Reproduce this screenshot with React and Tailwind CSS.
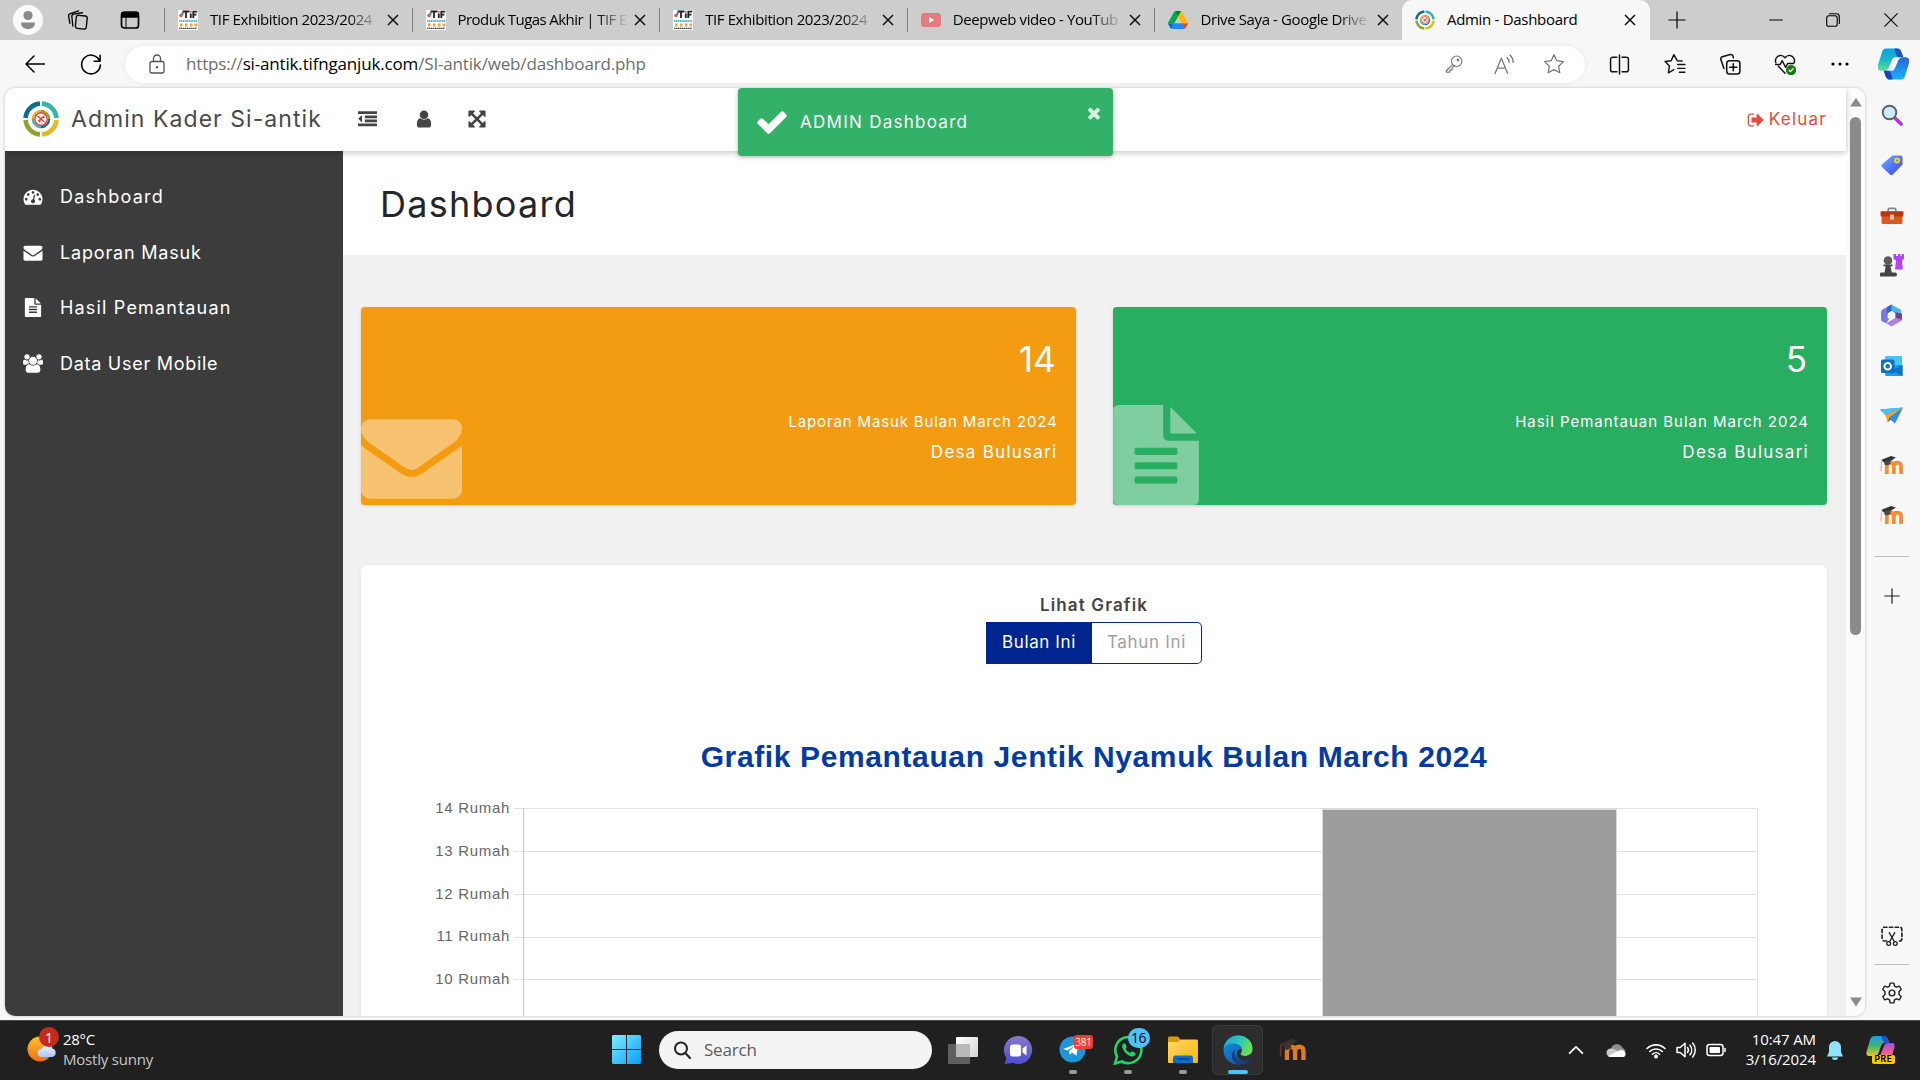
import React from 'react';

const UI = "font-['Open_Sans',sans-serif]";

const FA = {
  envelope: 'M1792 710v794q0 66-47 113t-113 47h-1472q-66 0-113-47t-47-113v-794q44 49 101 87 362 246 497 345 57 42 92.5 65.5t94.5 48 110 24.5h2q51 0 110-24.5t94.5-48 92.5-65.5q170-123 498-345 57-39 100-87zm0-294q0 79-49 151t-122 123q-376 261-468 325-10 7-42.5 31t-54 38.5-52 32.5-57.5 27-50 9h-2q-23 0-50-9t-57.5-27-52-32.5-54-38.5-42.5-31q-91-64-262-182.5t-205-142.5q-62-42-117-115.5t-55-136.5q0-78 41.5-130t118.5-52h1472q65 0 112.5 47t47.5 113z',
  file: 'M1596 476q14 14 28 36h-472v-472q22 14 36 28zm-476 164h544v1056q0 40-28 68t-68 28h-1344q-40 0-68-28t-28-68v-1600q0-40 28-68t68-28h800v544q0 40 28 68t68 28zm160 736v-64q0-14-9-23t-23-9h-704q-14 0-23 9t-9 23v64q0 14 9 23t23 9h704q14 0 23-9t9-23zm0-256v-64q0-14-9-23t-23-9h-704q-14 0-23 9t-9 23v64q0 14 9 23t23 9h704q14 0 23-9t9-23zm0-256v-64q0-14-9-23t-23-9h-704q-14 0-23 9t-9 23v64q0 14 9 23t23 9h704q14 0 23-9t9-23z',
  users: 'M593 896q-162 5-265 128h-134q-82 0-138-40.5t-56-118.5q0-353 124-353 6 0 43.5 21t97.5 42.5 119 21.5q67 0 133-23-5 37-5 66 0 139 81 256zm1071 637q0 120-73 189.5t-194 69.5h-874q-121 0-194-69.5t-73-189.5q0-53 3.5-103.5t14-109 26.5-108.5 43-97.5 62-81 85.5-53.5 111.5-20q10 0 43 21.5t73 48 107 48 135 21.5 135-21.5 107-48 73-48 43-21.5q61 0 111.5 20t85.5 53.5 62 81 43 97.5 26.5 108.5 14 109 3.5 103.5zm-1024-1277q0 106-75 181t-181 75-181-75-75-181 75-181 181-75 181 75 75 181zm704 384q0 159-112.5 271.5t-271.5 112.5-271.5-112.5-112.5-271.5 112.5-271.5 271.5-112.5 271.5 112.5 112.5 271.5zm576 225q0 78-56 118.5t-138 40.5h-134q-103-123-265-128 81-117 81-256 0-29-5-66 66 23 133 23 59 0 119-21.5t97.5-42.5 43.5-21q124 0 124 353zm-128-609q0 106-75 181t-181 75-181-75-75-181 75-181 181-75 181 75 75 181z',
  user: 'M1536 1399q0 109-62.5 187t-150.5 78h-854q-88 0-150.5-78t-62.5-187q0-85 8.5-160.5t31.5-152 58.5-131 94-89 134.5-34.5q131 128 313 128t313-128q76 0 134.5 34.5t94 89 58.5 131 31.5 152 8.5 160.5zm-256-887q0 159-112.5 271.5t-271.5 112.5-271.5-112.5-112.5-271.5 112.5-271.5 271.5-112.5 271.5 112.5 112.5 271.5z',
  gauge: 'M384 1152q0-53-37.5-90.5t-90.5-37.5-90.5 37.5-37.5 90.5 37.5 90.5 90.5 37.5 90.5-37.5 37.5-90.5zm192-448q0-53-37.5-90.5t-90.5-37.5-90.5 37.5-37.5 90.5 37.5 90.5 90.5 37.5 90.5-37.5 37.5-90.5zm428 481l101-382q6-26-7.5-48.5t-38.5-29.5-48 6.5-30 39.5l-101 382q-60 5-107 43.5t-63 98.5q-20 77 20 146t117 89 146-20 89-117q16-60-6-117t-72-91zm660-33q0-53-37.5-90.5t-90.5-37.5-90.5 37.5-37.5 90.5 37.5 90.5 90.5 37.5 90.5-37.5 37.5-90.5zm-640-640q0-53-37.5-90.5t-90.5-37.5-90.5 37.5-37.5 90.5 37.5 90.5 90.5 37.5 90.5-37.5 37.5-90.5zm448 192q0-53-37.5-90.5t-90.5-37.5-90.5 37.5-37.5 90.5 37.5 90.5 90.5 37.5 90.5-37.5 37.5-90.5zm320 448q0 261-141 483-19 29-54 29h-1402q-35 0-54-29-141-221-141-483 0-182 71-348t191-286 286-191 348-71 348 71 286 191 191 286 71 348z',
  outdent: 'M384 544v576q0 13-9.5 22.5t-22.5 9.5q-14 0-23-9l-288-288q-9-9-9-23t9-23l288-288q9-9 23-9 13 0 22.5 9.5t9.5 22.5zm1408 768v192q0 13-9.5 22.5t-22.5 9.5h-1728q-13 0-22.5-9.5t-9.5-22.5v-192q0-13 9.5-22.5t22.5-9.5h1728q13 0 22.5 9.5t9.5 22.5zm0-384v192q0 13-9.5 22.5t-22.5 9.5h-1088q-13 0-22.5-9.5t-9.5-22.5v-192q0-13 9.5-22.5t22.5-9.5h1088q13 0 22.5 9.5t9.5 22.5zm0-384v192q0 13-9.5 22.5t-22.5 9.5h-1088q-13 0-22.5-9.5t-9.5-22.5v-192q0-13 9.5-22.5t22.5-9.5h1088q13 0 22.5 9.5t9.5 22.5zm0-384v192q0 13-9.5 22.5t-22.5 9.5h-1728q-13 0-22.5-9.5t-9.5-22.5v-192q0-13 9.5-22.5t22.5-9.5h1728q13 0 22.5 9.5t9.5 22.5z',
  arrows: 'M1411 541l-355 355 355 355 144-144q29-31 70-14 39 17 39 59v448q0 26-19 45t-45 19h-448q-42 0-59-40-17-39 14-69l144-144-355-355-355 355 144 144q31 30 14 69-17 40-59 40h-448q-26 0-45-19t-19-45v-448q0-42 40-59 39-17 69 14l144 144 355-355-355-355-144 144q-19 19-45 19-12 0-24-5-40-17-40-59v-448q0-26 19-45t45-19h448q42 0 59 40 17 39-14 69l-144 144 355 355 355-355-144-144q-31-30-14-69 17-40 59-40h448q26 0 45 19t19 45v448q0 42-39 59-13 5-25 5-26 0-45-19z',
  check: 'M1671 566q0 40-28 68l-724 724-136 136q-28 28-68 28t-68-28l-136-136-362-362q-28-28-28-68t28-68l136-136q28-28 68-28t68 28l294 295 656-657q28-28 68-28t68 28l136 136q28 28 28 68z',
  times: 'M1490 1322q0 40-28 68l-136 136q-28 28-68 28t-68-28l-294-294-294 294q-28 28-68 28t-68-28l-136-136q-28-28-28-68t28-68l294-294-294-294q-28-28-28-68t28-68l136-136q28-28 68-28t68 28l294 294 294-294q28-28 68-28t68 28l136 136q28 28 28 68t-28 68l-294 294 294 294q28 28 28 68z',
  signOut: 'M704 1440q0 4 1 20t.5 26.5-3 23.5-10 19.5-20.5 6.5h-320q-119 0-203.5-84.5t-84.5-203.5v-704q0-119 84.5-203.5t203.5-84.5h320q13 0 22.5 9.5t9.5 22.5q0 4 1 20t.5 26.5-3 23.5-10 19.5-20.5 6.5h-320q-66 0-113 47t-47 113v704q0 66 47 113t113 47h312l11.5 1 11.5 3 8 5.5 7 9 2 13.5zm928-544q0 26-19 45l-544 544q-19 19-45 19t-45-19-19-45v-288h-448q-26 0-45-19t-19-45v-384q0-26 19-45t45-19h448v-288q0-26 19-45t45-19 45 19l544 544q19 19 19 45z',
};

function Fa({ name, box = '0 0 1792 1792', className }) {
  return (
    <svg viewBox={box} fill="currentColor" className={className}>
      <path d={FA[name]} />
    </svg>
  );
}

/* Thin outline icon on a 20-unit grid */
function Line({ children, className = 'size-5', sw = 1.3 }) {
  return (
    <svg viewBox="0 0 20 20" fill="none" stroke="currentColor" strokeWidth={sw} strokeLinecap="round" strokeLinejoin="round" className={`shrink-0 ${className}`}>
      {children}
    </svg>
  );
}

function SiAntikLogo({ className }) {
  return (
    <svg viewBox="0 0 36 36" fill="none" className={`shrink-0 ${className}`}>
      <circle cx="18" cy="18" r="17.9" fill="#fff" />
      <g strokeWidth="4.6">
        <path d="M2.6 17A15.5 15.5 0 0 1 17 2.6" stroke="#0d6d93" />
        <path d="M19 2.6A15.5 15.5 0 0 1 33.400 17" stroke="#35b5a8" />
        <path d="M33.400 19A15.500 15.500 0 0 1 19 33.400" stroke="#e6b923" />
        <path d="M17 33.400A15.500 15.500 0 0 1 2.600 19" stroke="#8aa62e" />
      </g>
      <g strokeWidth="2.200">
        <path d="M9.800 18A8.200 8.200 0 0 1 18 9.800" stroke="#e6b923" />
        <path d="M18 9.800A8.200 8.200 0 0 1 26.200 18" stroke="#8aa62e" />
        <path d="M26.200 18A8.200 8.200 0 0 1 18 26.200" stroke="#0d6d93" />
        <path d="M18 26.200A8.200 8.200 0 0 1 9.800 18" stroke="#35b5a8" />
      </g>
      <circle cx="18" cy="18" r="6.200" stroke="#ee3a32" strokeWidth="1.400" fill="#fff" />
      <path d="M14.500 15l7 6M15 20l3-2 3.500-3.500M17.500 18l-1 3.500M18 16l3.500.5" stroke="#ee3a32" strokeWidth="1.200" />
    </svg>
  );
}

function TifIcon() {
  return (
    <svg viewBox="0 0 20 20" className="size-5 shrink-0">
      <rect width="20" height="20" fill="#fff" />
      <circle cx="3" cy="5.500" r="1.700" fill="#e8502f" />
      <circle cx="4.500" cy="3.500" r="1.200" fill="#2b8fd0" />
      <path d="M4.500 1.500h7M8 1.500V8M12.800 3.500V8M15.300 8V1.600h4M15.300 4.700h3.200" stroke="#222" strokeWidth="1.800" fill="none" />
      <circle cx="12.800" cy="1.700" r="1" fill="#e8502f" />
      <path d="M1 11h18" stroke="#4db4e8" strokeWidth="1.800" strokeDasharray="1.400 .5" />
      <path d="M2 15h2.500M7 15h2.500M12 15h2.500M16.500 15H19" stroke="#f0a04b" strokeWidth="3" />
      <path d="M1 18.400h18" stroke="#444" strokeWidth="1.200" strokeDasharray="1.600 .4" />
    </svg>
  );
}

function YoutubeIcon() {
  return (
    <svg viewBox="0 0 20 20" className="size-5 shrink-0">
      <rect y="3" width="20" height="14" rx="3.500" fill="#e67b7d" />
      <path d="M8 7l5.200 3L8 13z" fill="#fff" />
    </svg>
  );
}

function DriveIcon() {
  return (
    <svg viewBox="0 0 87 78" className="h-[18px] w-5 shrink-0">
      <path d="M6.600 66.850l3.850 6.650c.8 1.400 1.950 2.500 3.300 3.300L27.500 53H0c0 1.550.4 3.100 1.200 4.500z" fill="#0066da" />
      <path d="M43.650 25L29.900 1.200c-1.350.8-2.500 1.900-3.300 3.300l-25.400 44A9.060 9.060 0 0 0 0 53h27.500z" fill="#00ac47" />
      <path d="M73.550 76.800c1.350-.8 2.500-1.900 3.300-3.300l1.600-2.750 7.650-13.250c.8-1.400 1.200-2.950 1.200-4.500H59.800l5.850 11.500z" fill="#ea4335" />
      <path d="M43.650 25L57.400 1.200C56.050.4 54.500 0 52.900 0H34.400c-1.600 0-3.150.45-4.500 1.200z" fill="#00832d" />
      <path d="M59.800 53H27.500L13.750 76.800c1.350.8 2.900 1.200 4.500 1.200h50.800c1.600 0 3.150-.45 4.500-1.200z" fill="#2684fc" />
      <path d="M73.400 26.500L60.700 4.500c-.8-1.400-1.950-2.500-3.300-3.300L43.650 25 59.800 53h27.450c0-1.550-.4-3.100-1.200-4.500z" fill="#ffba00" />
    </svg>
  );
}

const TABS = [
  { icon: <TifIcon />, title: 'TIF Exhibition 2023/2024', cls: 'tracking-[-0.4px]' },
  { icon: <TifIcon />, title: 'Produk Tugas Akhir | TIF E', cls: 'tracking-[-0.58px]' },
  { icon: <TifIcon />, title: 'TIF Exhibition 2023/2024', cls: 'tracking-[-0.4px]' },
  { icon: <YoutubeIcon />, title: 'Deepweb video - YouTub', cls: 'tracking-[-0.4px]' },
  { icon: <DriveIcon />, title: 'Drive Saya - Google Drive', cls: 'tracking-[-0.38px]' },
];

function CloseX() {
  return (
    <svg viewBox="0 0 12 12" className="size-3 shrink-0" stroke="#111" strokeWidth="1.500" fill="none">
      <path d="M1 1l10 10M11 1L1 11" />
    </svg>
  );
}

function TabStrip() {
  return (
    <div className="flex h-10 shrink-0 bg-[#cdcdcd]">
      <div className="flex w-[164px] items-center pl-[13px]">
        <svg viewBox="0 0 30 30" className="size-[30px]">
          <circle cx="15" cy="15" r="15" fill="#fafafa" />
          <circle cx="15" cy="10.500" r="4.600" fill="#8a8a8a" />
          <path d="M8 17.500h14c0 4.500-3 6.500-7 6.500s-7-2-7-6.500z" fill="#8a8a8a" />
        </svg>
        <Line className="ml-6 size-[22px]" sw={1.200}>
          <rect x="8" y="6" width="10" height="12" rx="2" transform="rotate(6 13 12)" />
          <path d="M5.300 15.500L4.400 6.800a2 2 0 0 1 1.700-2.200l8-1.200M2.600 13l-1.100-6.500A2 2 0 0 1 3 4.200l7.500-2.400" />
        </Line>
        <Line className="ml-[31px] size-5" sw={1.700}>
          <rect x="1.500" y="2" width="17" height="16" rx="2.800" />
          <path d="M2 3h16v4H2z" fill="currentColor" />
          <path d="M6 7v11" strokeWidth="1" />
        </Line>
      </div>
      {TABS.map((t, i) => (
        <div key={i} className="flex w-[247.600px] items-center pr-[13px]">
          <div className="h-6 w-px bg-[#7d7d7d]" />
          <div className="ml-[13px]">{t.icon}</div>
          <div className={`ml-3 w-[172px] whitespace-nowrap pb-[2px] text-[15px] text-black [mask-image:linear-gradient(to_right,black_80%,transparent_99%)] ${t.cls}`}>{t.title}</div>
          <div className="ml-auto"><CloseX /></div>
        </div>
      ))}
      <div className="flex w-[248px] items-center rounded-t-[10px] bg-[#f7f7f7] pl-[13px] pr-[14px]">
        <SiAntikLogo className="size-5" />
        <div className="ml-3 pb-[2px] text-[15px] tracking-[-0.3px] text-black">Admin - Dashboard</div>
        <div className="ml-auto"><CloseX /></div>
      </div>
      <div className="flex flex-1 items-center pl-[18px] text-black">
        <Line className="size-[18px]" sw={1.300}><path d="M10 1v18M1 10h18" /></Line>
        <Line className="ml-[83px] size-[14px]" sw={1.600}><path d="M1 10h18" /></Line>
        <Line className="ml-[43px] size-[14px]" sw={1.600}>
          <rect x="1" y="4" width="15" height="15" rx="3" />
          <path d="M5 1h10a4 4 0 0 1 4 4v10" />
        </Line>
        <Line className="ml-[44px] size-[14px]" sw={1.500}><path d="M1 1l18 18M19 1L1 19" /></Line>
      </div>
    </div>
  );
}

function Slot({ w, children }) {
  return <div className={`flex shrink-0 items-center justify-center ${w}`}>{children}</div>;
}

function CopilotIcon() {
  return (
    <svg viewBox="0 0 32 32" className="h-8 w-[31px]">
      <defs>
        <linearGradient id="cpA" x1="0" y1="0" x2="0" y2="1"><stop offset="0" stopColor="#0a9fe4" /><stop offset=".5" stopColor="#1bb6c8" /><stop offset="1" stopColor="#5fe08c" /></linearGradient>
        <linearGradient id="cpB" x1="0" y1="0" x2="0" y2="1"><stop offset="0" stopColor="#2b63d9" /><stop offset="1" stopColor="#16b4ff" /></linearGradient>
      </defs>
      <path d="M9 0h11c3 0 4 3 5 6l1 3h-8c-2 0-3 1-4 4l-3 7c-1 2-3 3-5 3H4c-3 0-5-2-4-6L4 4c1-3 2-4 5-4z" fill="url(#cpA)" />
      <path d="M17 0h3c3 0 4 3 5 6l1 3h-5c-2-1-3-4-4-9z" fill="#1c56b8" />
      <path d="M23 32H12c-3 0-4-3-5-6l-1-3h8c2 0 3-1 4-4l3-7c1-2 3-3 5-3h2c3 0 5 2 4 6l-4 13c-1 3-2 4-5 4z" fill="url(#cpB)" />
      <path d="M15 32h-3c-3 0-4-3-5-6l-1-3h5c2 1 3 4 4 9z" fill="#1747b5" />
    </svg>
  );
}

const STAR = 'M10 1.500l2.600 5.500 6 .8-4.400 4.200 1.100 6L10 15.100 4.700 18l1.100-6L1.400 7.800l6-.8z';

function Toolbar() {
  return (
    <div className="flex h-12 shrink-0 items-center bg-[#f7f7f7]">
      <Slot w="w-[69px]">
        <Line className="size-5" sw={1.500}><path d="M19.500 10H1M9 2L1 10l8 8" /></Line>
      </Slot>
      <Slot w="w-[43px]">
        <Line className="size-[22px]" sw={1.400}><path d="M18 7.500A8.500 8.500 0 1 0 18.500 11M18.300 2v5.500h-5.500" /></Line>
      </Slot>
      <div className="ml-[13px] flex h-[37px] w-[1460px] items-center rounded-full bg-white pl-[22px] shadow-[0_0_4px_rgba(0,0,0,0.08)]">
        <Line className="size-5 text-[#555]" sw={1.300}>
          <rect x="3" y="7.500" width="14" height="11.500" rx="2" />
          <path d="M6.500 7.500V4.500a3.500 3.500 0 0 1 7 0v3" />
          <circle cx="10" cy="13.200" r=".6" fill="currentColor" />
        </Line>
        <div className="ml-[19px] text-[17px] tracking-[-0.165px] text-[#6d6d6d]">
          https://<span className="text-black">si-antik.tifnganjuk.com</span>/SI-antik/web/dashboard.php
        </div>
        <div className="ml-auto flex text-[#757575]">
          <Slot w="w-[50px]">
            <Line className="size-[18px]" sw={1.200}>
              <circle cx="13" cy="7" r="5.800" /><circle cx="14.500" cy="5.500" r="1" />
              <path d="M8.500 10.500L1.500 17.500V19h4v-2.500H8V14l2.200-1.800" />
            </Line>
          </Slot>
          <Slot w="w-[50px]">
            <Line className="size-[21px]" sw={1.200}><path d="M1 18.500L7 4l6 14.500M3.200 13.500h7.600M12.500 3.500a5.500 5.500 0 0 1 1.800 4.500M15.300 1a10 10 0 0 1 3 7" /></Line>
          </Slot>
          <Slot w="w-[50px]"><Line className="size-[22px]" sw={1.100}><path d={STAR} /></Line></Slot>
        </div>
        <div className="w-[6px]" />
      </div>
      <div className="ml-[6px] flex items-center text-[#111]">
        <Slot w="w-[56px]">
          <Line className="size-[21px]" sw={1.400}><path d="M7.500 3H3.500a2 2 0 0 0-2 2v10a2 2 0 0 0 2 2h4M10 1v18M12.500 3h4a2 2 0 0 1 2 2v10a2 2 0 0 1-2 2h-4" /></Line>
        </Slot>
        <Slot w="w-[55px]">
          <Line className="size-[22px]" sw={1.300}><path d="M12 7L9 1.500 6.500 7l-5.500.8 4 4L4 18l5-2.800M12 7l4.500.3M12.500 10.500H19M12.500 14H19M14 17.500h5" /></Line>
        </Slot>
        <Slot w="w-[55px]">
          <Line className="size-[22px]" sw={1.400}>
            <rect x="7" y="7" width="12" height="12" rx="2.500" />
            <path d="M13 9.800v6.400M9.800 13h6.400M4.500 14l-2.800-8A2 2 0 0 1 3 3.400l7.300-2a2 2 0 0 1 2.400 1.300l.4 1.700" />
          </Line>
        </Slot>
        <Slot w="w-[55px]">
          <Line className="size-[22px]" sw={1.300}>
            <path d="M1.700 8.800C.6 6 2.300 2.500 5.500 2.200 7.500 2 9 3 10 4.300 11 3 12.500 2 14.500 2.200c3.200.3 4.900 3.800 3.800 6.600M4 12l6 6.500M1.500 10.500h4L7.500 7l3 6 2-3.500h5.500" />
            <circle cx="15.500" cy="15.500" r="4" fill="#107c10" stroke="#107c10" />
            <path d="M13.700 15.600l1.300 1.300 2.400-2.600" stroke="#fff" />
          </Line>
        </Slot>
        <Slot w="w-[55px]">
          <svg viewBox="0 0 18 4" className="h-1 w-[18px]"><circle cx="2" cy="2" r="1.600" /><circle cx="9" cy="2" r="1.600" /><circle cx="16" cy="2" r="1.600" /></svg>
        </Slot>
        <Slot w="w-[52px]"><CopilotIcon /></Slot>
      </div>
    </div>
  );
}

const MENU = [
  { icon: 'gauge', label: 'Dashboard', cls: 'tracking-[1.250px]' },
  { icon: 'envelope', label: 'Laporan Masuk', cls: 'tracking-[0.820px]' },
  { icon: 'file', label: 'Hasil Pemantauan', cls: 'tracking-[1.180px]' },
  { icon: 'users', label: 'Data User Mobile', cls: 'tracking-[0.720px]', box: '0 0 1920 1792' },
];

function Navbar() {
  return (
    <header className="relative z-10 flex h-[63px] shrink-0 items-center bg-white pl-[18px] pr-[19px] text-[#444] shadow-[0_2px_6px_rgba(0,0,0,0.22)]">
      <SiAntikLogo className="-mt-px size-9" />
      <span className="ml-3 text-[23px] tracking-[1.050px] text-[#4a4a4a]">Admin Kader Si-antik</span>
      <Fa name="outdent" className="ml-[36px] size-[19px]" />
      <Fa name="user" className="-mt-[2px] ml-[37px] size-[20px]" />
      <Fa name="arrows" className="-mt-px ml-[33px] size-[20px]" />
      <div className="ml-auto flex items-center text-[#e74c3c]">
        <Fa name="signOut" className="size-[18px]" />
        <span className="ml-1 text-[17px] tracking-[1.250px]">Keluar</span>
      </div>
    </header>
  );
}

function Toast() {
  return (
    <div className="absolute left-[733px] top-0 z-20 flex h-[68px] w-[375px] items-center rounded-[4px] bg-[#33b168] pl-[17px] text-white shadow-[0_1px_4px_rgba(0,0,0,0.3)]">
      <Fa name="check" className="size-[34px]" />
      <span className="ml-[11px] pt-px text-[17px] tracking-[1.270px]">ADMIN Dashboard</span>
      <Fa name="times" className="absolute right-[10px] top-[16px] size-[18px] text-white/80" />
    </div>
  );
}

function StatCard({ color, icon, iconBox, iconCls, value, caption, captionCls }) {
  return (
    <div className={`relative flex h-[198px] flex-1 flex-col items-end overflow-hidden rounded-[4px] pr-[18px] text-white shadow-[0_1px_3px_rgba(0,0,0,0.15)] ${color}`}>
      <div className="mr-[2px] mt-[30px] text-[35px] leading-[44px]">{value}</div>
      <div className={`mt-[29px] text-[15px] leading-[24px] ${captionCls}`}>{caption}</div>
      <div className="mt-[6px] text-[17px] leading-[24px] tracking-[1.270px]">Desa Bulusari</div>
      <Fa name={icon} box={iconBox} className={`absolute left-0 opacity-40 ${iconCls}`} />
    </div>
  );
}

function Chart() {
  return (
    <div className="flex font-['Liberation_Sans',sans-serif]">
      <div className="flex w-[149px] flex-col text-right text-[15px] leading-[43px] tracking-[0.680px] text-[#666]">
        {['14 Rumah', '13 Rumah', '12 Rumah', '11 Rumah', '10 Rumah'].map((l) => (
          <div key={l} className="h-[42.800px]">{l}</div>
        ))}
      </div>
      <svg viewBox="0 0 1250 220" className="ml-[4px] mt-[22px] h-[220px] w-[1250px]" shapeRendering="crispEdges">
        {[0, 43, 86, 129, 171].map((y) => (
          <rect key={y} x="0" y={y} width="1244" height="1" fill="#e2e2e2" />
        ))}
        <rect x="9" y="0" width="1" height="220" fill="#c4c4c4" />
        <rect x="1243" y="0" width="1" height="220" fill="#e2e2e2" />
        <rect x="808" y="0" width="295" height="220" fill="#dadada" />
        <rect x="809" y="2" width="293" height="220" fill="#9c9c9c" />
      </svg>
    </div>
  );
}

function Page() {
  return (
    <div className="relative flex w-[1841px] flex-col font-['Inter',sans-serif]">
      <Navbar />
      <Toast />
      <div className="flex min-h-0 flex-1">
        <nav className="flex w-[338px] shrink-0 flex-col bg-[#3c3c3c] pt-[18px] text-white">
          {MENU.map((m) => (
            <div key={m.label} className="flex h-[55.500px] items-center pl-[18px]">
              <div className="w-[37px]"><Fa name={m.icon} box={m.box} className="h-[19px] w-[20px]" /></div>
              <span className={`text-[18px] ${m.cls}`}>{m.label}</span>
            </div>
          ))}
        </nav>
        <main className="flex min-w-0 flex-1 flex-col bg-[#f1f1f1]">
          <div className="h-[104px] shrink-0 bg-white pl-[37px] pt-[29px]">
            <h1 className="text-[36px] leading-[48px] tracking-[1.250px] text-[#262626]">Dashboard</h1>
          </div>
          <div className="ml-[18px] mr-[19px] mt-[52px] flex gap-[37px]">
            <StatCard color="bg-[#f39c12]" icon="envelope" iconBox="0 256 1792 1408" iconCls="top-[112px] h-[80px] w-[101px]" value="14" caption="Laporan Masuk Bulan March 2024" captionCls="tracking-[0.850px]" />
            <StatCard color="bg-[#29ae61]" icon="file" iconBox="128 0 1536 1792" iconCls="top-[98px] h-[100px] w-[86px]" value="5" caption="Hasil Pemantauan Bulan March 2024" captionCls="tracking-[0.980px]" />
          </div>
          <section className="ml-[18px] mr-[19px] mt-[60px] flex min-h-0 flex-1 flex-col overflow-hidden rounded-t-[6px] bg-white shadow-[0_0_3px_rgba(0,0,0,0.08)]">
            <div className="mt-[28px] text-center text-[17px] font-semibold leading-[24px] tracking-[1.150px] text-[#444]">Lihat Grafik</div>
            <div className="mt-[5px] flex justify-center text-[17px]">
              <div className="flex h-[42px] w-[106px] items-center justify-center bg-[#00258f] pb-px tracking-[0.600px] text-white">Bulan Ini</div>
              <div className="flex h-[42px] w-[110px] items-center justify-center rounded-r-[5px] border border-l-0 border-[#00258f] pb-px tracking-[0.700px] text-[#a0a0a0]">Tahun Ini</div>
            </div>
            <h2 className="mt-[75px] text-center font-['Liberation_Sans',sans-serif] text-[30px] font-bold leading-[36px] tracking-[0.620px] text-[#043ba0]">Grafik Pemantauan Jentik Nyamuk Bulan March 2024</h2>
            <div className="mt-[11px]"><Chart /></div>
          </section>
        </main>
      </div>
    </div>
  );
}

function Scrollbar() {
  return (
    <div className="flex w-[19px] flex-col items-center bg-[#fcfcfc] pt-[10px]">
      <svg viewBox="0 0 12 9" className="h-[9px] w-3"><path d="M6 0l6 8.500H0z" fill="#8b8b8b" /></svg>
      <div className="mt-[10px] h-[518px] w-[11px] rounded-full bg-[#8b8b8b]" />
      <svg viewBox="0 0 12 10" className="mb-[9px] mt-auto h-[10px] w-3"><path d="M0 .5h12L6 9.500z" fill="#8b8b8b" /></svg>
    </div>
  );
}

function Moodle({ dark }) {
  return (
    <svg viewBox="0 0 26 20" className={dark ? 'h-[22px] w-[30px]' : 'h-[19px] w-[26px]'}>
      <path d="M7.500 19V11q0-4 3.700-4t3.700 4v8M14.900 11q0-4 3.900-4t3.700 4v8" fill="none" stroke={dark ? '#dd7a24' : '#f88d2d'} strokeWidth="4" />
      <path d="M2 4L12 0l5 1.500L9 7 4 6.500z" fill={dark ? '#38322e' : '#333'} />
      <path d="M5 5.500l6-1 .5 4-4 1.500-2.500-1z" fill={dark ? '#45352b' : '#484848'} />
      <path d="M2 5v6M1.600 11v5" stroke={dark ? '#6b4426' : '#eab18b'} strokeWidth="1.200" />
    </svg>
  );
}

const APPS = [
  <svg key="s" viewBox="0 0 22 22" className="size-[22px]">
    <path d="M14 14l6 6" stroke="#b52df0" strokeWidth="3.600" strokeLinecap="round" />
    <path d="M12.500 12.500l3 3" stroke="#777" strokeWidth="2.400" />
    <circle cx="8.500" cy="8.500" r="6.800" fill="#cdeafb" stroke="#5f5f5f" strokeWidth="1.900" />
  </svg>,
  <svg key="t" viewBox="0 0 22 22" className="size-[22px]">
    <defs><linearGradient id="tagG" x1="0" y1="0" x2="1" y2="1"><stop offset="0" stopColor="#6fb4ff" /><stop offset="1" stopColor="#3c3df2" /></linearGradient></defs>
    <path d="M11.500 1.500h8a2 2 0 0 1 2 2v7l-9.700 10a2 2 0 0 1-2.800 0L1 13a2 2 0 0 1 0-2.800z" fill="url(#tagG)" />
    <circle cx="16" cy="6.500" r="3" fill="#f2d21f" /><circle cx="16" cy="6.500" r="1.100" fill="#6b8ad8" />
  </svg>,
  <svg key="b" viewBox="0 0 24 20" className="mt-[2px] h-[19px] w-6">
    <path d="M8 5V3q0-1.500 1.500-1.500h5Q16 1.500 16 3v2" fill="none" stroke="#7a8a90" strokeWidth="1.800" />
    <rect x="1" y="5" width="22" height="13" rx="1.500" fill="#e0581f" />
    <rect y="4.500" width="24" height="5.500" rx="1" fill="#b53a0c" />
    <rect x="10" y="8" width="4" height="5.500" rx="1" fill="#c9c9c9" />
  </svg>,
  <svg key="c" viewBox="0 0 24 24" className="size-6">
    <path d="M13.500 1H16v2h2V1h2.500v2h1.500V1H24v5l-2 1.500.8 9H15l1-9-2.500-1.500z" fill="#b443f0" />
    <circle cx="8" cy="7.500" r="4.300" fill="#5c5c5c" />
    <path d="M3.500 11.500h9v1.800h-2l1.300 6.200H15a1.500 1.500 0 0 1 0 4H1.500a1.500 1.500 0 0 1 0-4h3l1.200-6.200H3.500z" fill="#444" />
  </svg>,
  <svg key="m" viewBox="0 0 22 22" className="size-[23px]">
    <path d="M11 .5l9 5v5l-6.500-2L11 7 8.500 8.500z" fill="#46b7ea" />
    <path d="M11 .5L2.500 5.300Q1 6.200 1 8v6.500q0 1.500 1.500 2.400L6 18.500l2.500-4V8z" fill="#7a78dc" />
    <path d="M11 .5L6.500 3v8L11 7z" fill="#3567c4" />
    <path d="M20.800 9v5.500q0 1.500-1.300 2.300L11 21.500l-5-3 5.500-3.500 3-2V8z" fill="#b183df" />
    <path d="M14 8l7 1v6l-7-2z" fill="#6b438f" />
    <path d="M11 6.800l3.700 2.100v4.200L11 15.200l-3.700-2.100V8.900z" fill="#f7f7f7" />
  </svg>,
  <svg key="o" viewBox="0 0 22 22" className="size-[22px]">
    <path d="M5 1h15a1 1 0 0 1 1 1v9H4V2a1 1 0 0 1 1-1z" fill="#42c6f5" />
    <path d="M3 10h18.500v10a1 1 0 0 1-1 1h-16z" fill="#1a9be6" />
    <path d="M21.500 10L11 15.500 21.500 21z" fill="#1272c4" />
    <rect x="0" y="4.500" width="13.500" height="13.500" rx="1.500" fill="#0b6fc7" />
    <circle cx="6.700" cy="11.200" r="3.300" fill="none" stroke="#fff" strokeWidth="2" />
  </svg>,
  <svg key="d" viewBox="0 0 23 18" className="h-[18px] w-[23px]">
    <path d="M0 2.500L23 .5 15 16.500l-5-4z" fill="#2c8df3" />
    <path d="M0 2.500L23 .5 5.500 8z" fill="#4cc0f5" />
    <path d="M23 .5L5.500 8l2 7 1.700-4.500z" fill="#f5a614" />
    <path d="M9.200 10.500l-1.700 4.800 3.700-3z" fill="#8a5d14" />
  </svg>,
  <Moodle key="m1" />,
  <Moodle key="m2" />,
];

function EdgeSidebar() {
  return (
    <aside className="flex flex-1 flex-col items-center pr-[2px] pt-[2px] text-[#222]">
      {APPS.map((a, i) => (
        <div key={i} className="flex h-[50.100px] shrink-0 items-center">{a}</div>
      ))}
      <div className="mt-[15px] h-px w-[35px] bg-[#bdbdbd]" />
      <Line className="mt-[31px] size-4" sw={1.500}><path d="M10 1v18M1 10h18" /></Line>
      <Line className="mb-[17px] mt-auto size-[22px]" sw={1.500}>
        <path d="M5 14.500H3a2 2 0 0 1-2-2V4a2 2 0 0 1 2-2h14a2 2 0 0 1 2 2v8.500a2 2 0 0 1-2 2h-2" strokeDasharray="3 2.200" />
        <circle cx="7" cy="16.800" r="1.700" strokeWidth="1.200" /><circle cx="13" cy="16.800" r="1.700" strokeWidth="1.200" />
        <path d="M7.800 15.200L12.500 7M12.200 15.200L7.500 7" strokeWidth="1.200" />
      </Line>
      <div className="h-px w-[35px] shrink-0 bg-[#bdbdbd]" />
      <Line className="mb-[16px] mt-[17px] size-[22px]" sw={1.300}>
        <path d="M8.300 1h3.400l.6 2.700 1.700 1 2.700-.9 1.700 3-2 1.900v2.600l2 1.900-1.700 3-2.700-.9-1.700 1-.6 2.700H8.300l-.6-2.700-1.700-1-2.700.9-1.700-3 2-1.900V8.700l-2-1.900 1.700-3 2.700.9 1.700-1z" />
        <circle cx="10" cy="10" r="2.600" />
      </Line>
    </aside>
  );
}

function TaskIcon({ children, active, dot }) {
  return (
    <div className="relative flex h-full w-[55px] items-center justify-center">
      {active && <div className="absolute inset-x-[2px] bottom-[5px] top-[4px] rounded-[5px] border border-[#3a3a3a] bg-[#2d2d2d]" />}
      <div className="relative -mt-[2px]">{children}</div>
      {dot && <div className="absolute bottom-[6px] h-1 w-2 rounded-full bg-[#9a9a9a]" />}
      {active && <div className="absolute bottom-[6px] h-1 w-5 rounded-full bg-[#4cc2ff]" />}
    </div>
  );
}

function Taskbar() {
  return (
    <footer className="flex h-[60px] shrink-0 items-center border-t border-[#474747] bg-[#202020] text-white">
      <div className="-mt-[4px] flex w-[612px] items-center">
        <div className="relative ml-[27px] mt-[3px] h-10 w-9">
          <svg viewBox="0 0 36 40" className="h-10 w-9">
            <defs>
              <linearGradient id="sun" x1="0" y1="0" x2="0" y2="1"><stop offset="0" stopColor="#f9c22e" /><stop offset="1" stopColor="#ee6f13" /></linearGradient>
              <linearGradient id="cld" x1="0" y1="0" x2="0" y2="1"><stop offset="0" stopColor="#e9f2fd" /><stop offset="1" stopColor="#a9c8f3" /></linearGradient>
            </defs>
            <circle cx="13" cy="19" r="12.500" fill="url(#sun)" />
            <path d="M15 27a4 4 0 0 1-.5-8 6 6 0 0 1 10.500-.5 4.300 4.300 0 0 1 0 8.500z" fill="url(#cld)" />
          </svg>
          <div className="absolute left-[12px] top-[-3px] flex size-5 items-center justify-center rounded-full bg-[#c42b1c] text-[14px]">1</div>
        </div>
        <div className="text-[15px] leading-[20px]">
          <div className="tracking-[-0.300px]">28°C</div>
          <div className="tracking-[-0.200px] text-[#c8c8c8]">Mostly sunny</div>
        </div>
      </div>
      <svg viewBox="0 0 29 29" className="-mt-[2px] size-[29px] shrink-0">
        <defs><linearGradient id="win" gradientUnits="userSpaceOnUse" x1="0" y1="0" x2="29" y2="29"><stop offset="0" stopColor="#7fefff" /><stop offset="1" stopColor="#089bff" /></linearGradient></defs>
        <path d="M1 0h13v14H0V1zM15 0h13l1 1v13H15zM0 15h14v14H1l-1-1zM15 15h14v13l-1 1H15z" fill="url(#win)" />
      </svg>
      <div className="-mt-px ml-[18px] flex h-[38px] w-[273px] shrink-0 items-center rounded-full bg-[#f3f3f3] pl-[14px]">
        <svg viewBox="0 0 18 18" className="size-[18px]" fill="none" stroke="#222" strokeWidth="2" strokeLinecap="round"><circle cx="8" cy="7.500" r="6" /><path d="M12.300 12l4.700 5" /></svg>
        <span className="ml-[13px] text-[17px] tracking-[-0.200px] text-[#5c5c5c]">Search</span>
      </div>
      <div className="ml-[3px] flex h-full">
        <TaskIcon>
          <svg viewBox="0 0 30 30" className="size-[30px]">
            <defs><linearGradient id="tv" x1="0" y1="0" x2="1" y2="1"><stop offset="0" stopColor="#fff" /><stop offset="1" stopColor="#d4d4d4" /></linearGradient></defs>
            <rect x="8" y="2" width="22" height="20" rx="1" fill="url(#tv)" />
            <rect x="0" y="9" width="22" height="20" rx="1" fill="#6b6b6b" opacity=".85" />
            <path d="M8 9h14v13H8z" fill="#b9b9b9" />
          </svg>
        </TaskIcon>
        <TaskIcon>
          <svg viewBox="0 0 30 30" className="size-[30px]">
            <defs><linearGradient id="chat" x1="0" y1="0" x2="0" y2="1"><stop offset="0" stopColor="#8b76c9" /><stop offset="1" stopColor="#4a4fd0" /></linearGradient></defs>
            <path d="M15 1a14 14 0 1 1-5 27l-8.500 1 2-6A14 14 0 0 1 15 1z" fill="url(#chat)" />
            <rect x="7" y="9.500" width="11" height="12" rx="2.500" fill="#fff" />
            <path d="M19.500 13.500l4-3v10l-4-3z" fill="#fff" />
          </svg>
        </TaskIcon>
        <TaskIcon dot>
          <svg viewBox="0 0 28 28" className="size-[27px]">
            <circle cx="14" cy="14" r="13.500" fill="#1e96d4" />
            <path d="M4.500 13.500l16-6.500-2.500 13.500-4.500-3.300-2.500 2.300-.5-4 6-5.500-8 5z" fill="#fff" />
          </svg>
          <div className="absolute left-[15px] top-[-1px] flex h-[14px] w-[19px] items-center justify-center rounded-[3px] bg-[#f23c34] text-[10px] tracking-[-0.200px]">381</div>
        </TaskIcon>
        <TaskIcon dot>
          <svg viewBox="0 0 30 30" className="size-[30px]" fill="none">
            <path d="M2 28.500l2-7A13 13 0 1 1 9 26.500z" stroke="#25d366" strokeWidth="2.600" />
            <path d="M10.500 8.500q-2 1.500-1 4.500 2.500 6.500 9 8.500 3 .5 4-2l-.2-1.500-3.300-1.700-2 1.800q-3.200-1.500-4.500-4.300l1.300-1.700-1.500-3.500z" fill="#25d366" />
          </svg>
          <div className="absolute left-[15px] top-[-7px] flex h-5 w-[22px] items-center justify-center rounded-full bg-[#4cc2ff] text-[14px] tracking-[-0.500px] text-black">16</div>
        </TaskIcon>
        <TaskIcon dot>
          <svg viewBox="0 0 30 28" className="h-7 w-[30px]">
            <defs><linearGradient id="fold" x1="0" y1="0" x2="1" y2="1"><stop offset="0" stopColor="#ffd965" /><stop offset="1" stopColor="#fbb40d" /></linearGradient></defs>
            <path d="M0 2Q0 .5 1.500 .5H10l3 3.500v6H0z" fill="#d99a0b" />
            <path d="M0 6h10l3-2.500h15.500Q30 3.500 30 5v21q0 1-1 1H1q-1 0-1-1z" fill="url(#fold)" />
            <path d="M5 27v-5q0-2.500 2.500-2.500h15Q25 19.500 25 22v5z" fill="#0a6fc9" />
            <path d="M9 23h12" stroke="#053f87" strokeWidth="1.400" />
          </svg>
        </TaskIcon>
        <TaskIcon active>
          <svg viewBox="0 0 30 30" className="size-[30px]">
            <defs>
              <linearGradient id="e1" x1="0" y1="0" x2="1" y2=".4"><stop offset="0" stopColor="#1a9fe0" /><stop offset=".55" stopColor="#2cc4c0" /><stop offset="1" stopColor="#6be04c" /></linearGradient>
              <linearGradient id="e2" x1="0" y1="0" x2="1" y2="1"><stop offset="0" stopColor="#1b8ddd" /><stop offset="1" stopColor="#0f4f9e" /></linearGradient>
            </defs>
            <circle cx="15" cy="15" r="14.500" fill="url(#e2)" />
            <path d="M.6 14C1.500 6 7.500.5 15 .5 24 .5 29.500 7 29.500 13.500c0 5-3.500 7.500-7.500 7.500-3.500 0-5-1.500-4.500-2.500 1-1.200 1.500-2 1.500-3.800C19 11 15 8.500 10.500 8.500 6 8.500 2 10.500.6 14z" fill="url(#e1)" />
            <path d="M11.500 14.500c-1 7 3.500 11.500 9.500 11.500 3 0 5-1 6.300-1.800.5-.3 1 .2.600.7C26 27.800 20.500 29.500 17 29.500 9 29 6.500 20 11.500 14.500z" fill="#143f87" />
            <path d="M17.500 18.500c-.5 1 1 2.500 4.500 2.500 3 0 5.500-1.200 6.700-3.500l-.2 6.500c-1.500 1-4 2-7 2-5 0-8.500-4-7.500-8.500 0-1.800 1.500-3.200 3.500-3.500 1.700 1.500 1 3.300 0 4.500z" fill="#2d2d2d" />
          </svg>
        </TaskIcon>
        <TaskIcon><Moodle dark /></TaskIcon>
      </div>
      <div className="-mt-px ml-auto flex items-center">
        <Line className="size-4" sw={2.200}><path d="M2 14l8-8 8 8" /></Line>
        <svg viewBox="0 0 22 16" className="-mt-px ml-[22px] h-4 w-[22px]">
          <path d="M5 7a6 6 0 0 1 11-2l4 4-9 1z" fill="#8d8d8d" />
          <path d="M4.500 15A4 4 0 0 1 5 6.500q2-.5 5 1.500l7 5z" fill="#c9c9c9" />
          <path d="M2 14l9-4.500q3-2.500 6.500-1A3.800 3.800 0 0 1 18 15H4.500q-1.500 0-2.500-1z" fill="#fff" />
        </svg>
        <Line className="-mt-px ml-[18px] size-5" sw={1.600}>
          <path d="M1 8.500a13 13 0 0 1 18 0M3.700 11.500a9 9 0 0 1 12.600 0M6.500 14.200a5 5 0 0 1 7 0" />
          <circle cx="10" cy="16.500" r="1.200" fill="currentColor" />
        </Line>
        <Line className="-mt-px ml-[10px] size-5" sw={1.500}>
          <path d="M1 7.500h3.200L9 3.200v13.600l-4.800-4.300H1zM11.500 7.500a4 4 0 0 1 0 5M14 5.200a7.500 7.500 0 0 1 0 9.600M16.700 3a11 11 0 0 1 0 14" />
        </Line>
        <Line className="-mt-px ml-[10px] size-5" sw={1.500}>
          <rect x="1" y="4.500" width="16" height="11" rx="2.500" />
          <rect x="3.500" y="7" width="10.500" height="6" rx=".8" fill="currentColor" stroke="none" />
          <path d="M19 8.500v3" />
        </Line>
        <div className="-mt-[3px] ml-[18px] w-[72px] text-right text-[15px] leading-[20px] tracking-[-0.100px]">
          <div>10:47 AM</div>
          <div>3/16/2024</div>
        </div>
        <svg viewBox="0 0 16 19" className="ml-[11px] h-[19px] w-4">
          <path d="M8 0a6 6 0 0 1 6 6v5l2 4.500H0L2 11V6a6 6 0 0 1 6-6zM5 16.500h6a3 2.500 0 0 1-6 0z" fill="#8fe3ff" />
        </svg>
        <div className="relative ml-[23px] mr-[24px] h-7 w-[30px]">
          <svg viewBox="0 0 30 28" className="h-7 w-[30px]">
            <defs>
              <linearGradient id="p1" x1="0" y1="0" x2="0" y2="1"><stop offset="0" stopColor="#1d9bf0" /><stop offset=".5" stopColor="#3fb370" /><stop offset="1" stopColor="#f5c518" /></linearGradient>
              <linearGradient id="p2" x1="0" y1="0" x2="0" y2="1"><stop offset="0" stopColor="#a34fe8" /><stop offset=".6" stopColor="#f0569a" /><stop offset="1" stopColor="#fd9a5c" /></linearGradient>
            </defs>
            <path d="M9 0h9c3 0 4 3 5 6l-6 1c-2 2-3 7-5 11-1 2-3 2-5 2H3c-3 0-3-3-2-6L4 4c1-3 2-4 5-4z" fill="url(#p1)" />
            <path d="M15 0h3c3 0 4 3 5 7h-3c-2 0-3-2-5-7z" fill="#2152d8" />
            <path d="M12 22c3-2 4-8 6-12 1-3 3-3 5-3h3c3 0 3 3 2 6l-3 9z" fill="url(#p2)" />
          </svg>
          <div className="absolute bottom-0 left-[6px] flex h-[9px] w-[23px] items-center justify-center rounded-[2px] bg-[#ffc800] font-['Inter',sans-serif] text-[8.500px] font-bold tracking-[0.600px] text-black">PRE</div>
        </div>
      </div>
    </footer>
  );
}

export default function App() {
  return (
    <div className={`flex h-[1080px] w-[1920px] flex-col overflow-hidden bg-[#f7f7f7] ${UI}`}>
      <TabStrip />
      <Toolbar />
      <div className="flex h-[932px] shrink-0 pl-[5px]">
        <div className="flex h-[928px] w-[1860px] shrink-0 overflow-hidden rounded-[10px] shadow-[0_0_3px_rgba(0,0,0,0.25)]">
          <Page />
          <Scrollbar />
        </div>
        <EdgeSidebar />
      </div>
      <Taskbar />
    </div>
  );
}
